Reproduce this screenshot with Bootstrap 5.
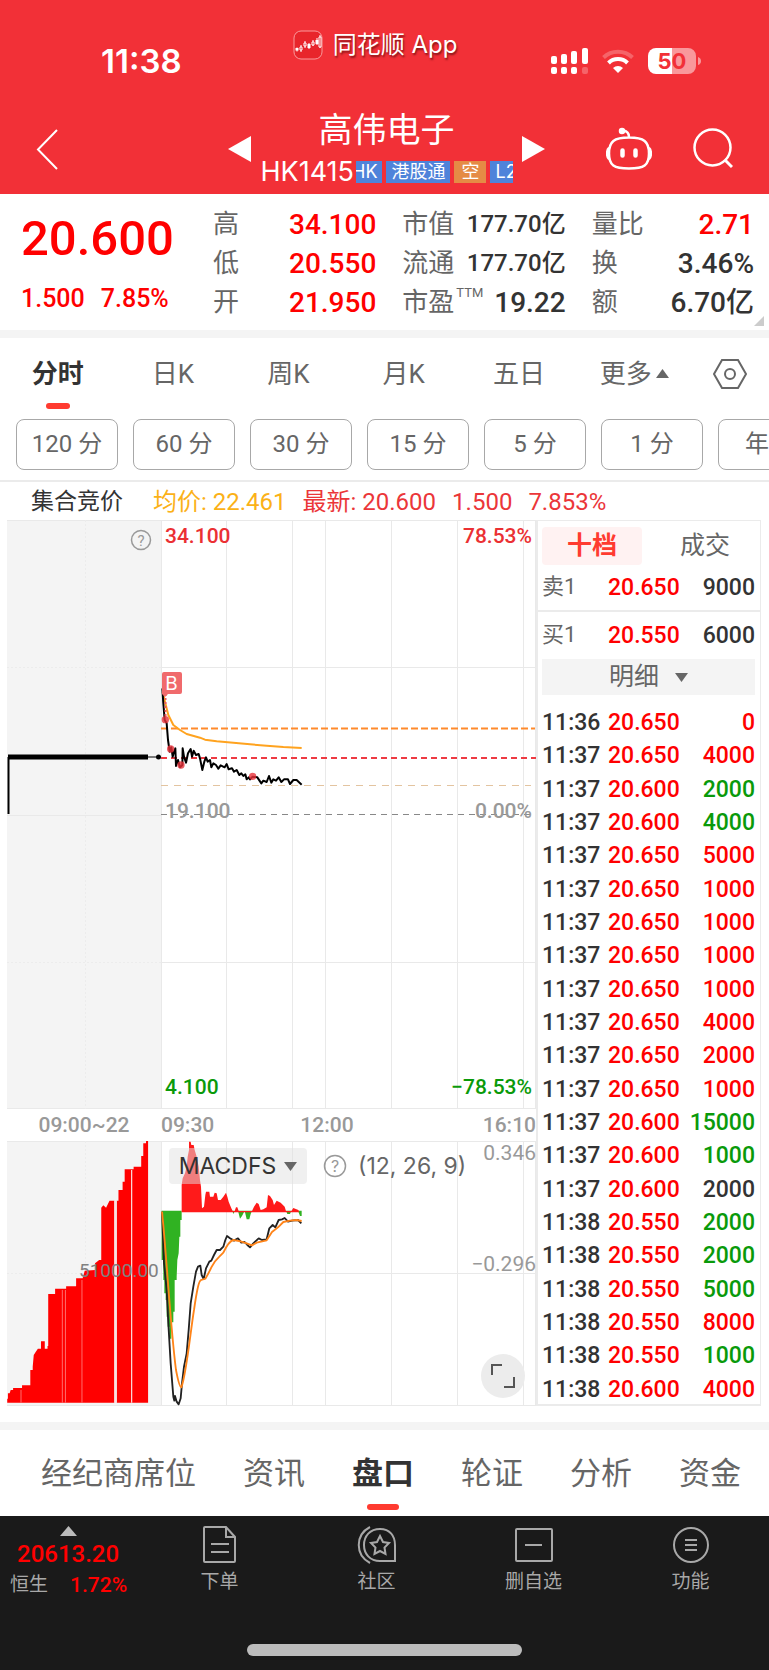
<!DOCTYPE html>
<html lang="zh-CN">
<head>
<meta charset="utf-8">
<meta name="viewport" content="width=device-width, initial-scale=1">
<title>高伟电子 HK1415</title>
<link href="https://cdn.jsdelivr.net/npm/bootstrap@5.3.0/dist/css/bootstrap.min.css" rel="stylesheet">
<style>
:root{--up:#f00;--down:#0a9a0a;--ink:#333;--soft:#666;--faint:#999;--line:#ebebeb;--strip:#f4f4f4}
body{font-family:Roboto,"Noto Sans CJK SC",sans-serif;color:var(--ink);background:#fff;line-height:1.2;overflow-x:hidden}
button{background:none;border:0;padding:0;color:inherit}
a{color:inherit;text-decoration:none}
svg{display:block;flex:none}
.ui{font-family:Inter,"Noto Sans CJK SC",sans-serif}
.up{color:var(--up)!important}.down{color:var(--down)!important}
.strip{height:8px;background:var(--strip)}

.top{background:#f23037;color:#fff}
.status{height:90px;padding:0 68px 0 101px}
.status>*{flex:1 1 0}
.clock{font-size:33px;font-weight:600;line-height:36px;padding-top:43px}
.appname{font-size:24px;line-height:30px;padding-top:30px;margin:0 52px 0 0;text-shadow:1px 2px 2px rgba(60,0,0,.6);white-space:nowrap}
.signals{padding-top:47px}
.titlebar{height:104px;padding:14px 36px 0}
.stock{width:252px}
.stock h1{font-size:34px;line-height:44px;margin:4px 0 6px;font-weight:400;text-align:center}
.code{font-size:27px;line-height:28px}
.chips{overflow:hidden;margin-left:2px}
.chip{font-size:18px;line-height:22px;height:22px;background:#4f83da;padding:0 5px;white-space:nowrap}
.chip.first{padding-left:0;margin-left:-4px}
.chip.short{background:#e58b45;padding:0 7px}
.side{width:184px}

.quote{padding:11px 15px 8px 21px;position:relative}
.last{width:192px}
.last .big{font-size:49px;font-weight:500;line-height:60px;margin-top:4px}
.last .chg{font-size:25px;font-weight:500;line-height:30px;gap:16px;margin-top:15px}
.stats{flex:1;display:grid;grid-template-columns:163fr 163fr 162fr;column-gap:26px;font-size:28px;font-weight:500}
.stats>div{height:39px}
.stats dt{font-size:26px;font-weight:400;color:var(--soft)}
.stats dd{margin:0}
.stats .mid{font-size:24px}
.stats sup{font-size:13px;top:-14px;margin-left:2px}
.corner{position:absolute;right:5px;bottom:4px}

.periods{height:81px;font-size:26px;color:var(--soft)}
.periods button{flex:1 1 0;display:flex;justify-content:center;align-items:flex-start;line-height:72px;height:81px;position:relative;white-space:nowrap}
.periods .gear{flex:0 0 77px}
.active-tab{color:var(--ink);font-weight:700}
.active-tab::after{content:"";position:absolute;left:50%;bottom:0;width:24px;height:6px;margin:0 0 10px -12px;border-radius:3px;background:#ff3b30}
.minutes{gap:15px;padding:0 0 10px 16px;overflow:hidden;border-bottom:2px solid var(--line)}
.minutes button{flex:0 0 102px;height:51px;border:1px solid #a8a8a8;border-radius:8px;font-size:24px;color:var(--soft);white-space:nowrap}
.legend-row{height:38px;padding:2px 0 0 31px;font-size:24px;gap:16px;color:#eb3639}
.legend-row .avg{color:#fbb117}
.legend-row .auction{color:var(--ink);font-size:23px;margin-right:14px}

.market{padding:0 8px 0 7px}
.plots{flex:1 1 0;min-width:0}
.plot{position:relative;font-size:21px;line-height:24px}
.plot svg.canvas{width:100%;height:auto}
.tag{position:absolute;color:var(--faint)}
.mid-weight{font-weight:500}
.axis{height:32px;font-size:21px;line-height:32px;color:var(--faint);font-weight:500}
.axis .noon{margin-left:86px}
.macd{position:absolute;left:162px;top:7px;height:36px}
.macd .pick{height:36px;width:138px;border-radius:4px;background:rgba(226,226,226,.5);font-size:23px;color:var(--ink)}
.macd .args{font-size:23px;color:var(--soft);white-space:nowrap;margin-left:11px}
.expand{position:absolute;right:11px;bottom:8px;width:44px;height:44px;border-radius:50%;background:#ececec}

.book{flex:0 0 225px;border:1px solid var(--line);border-width:1px 1px 2px 2px;padding:6px 5px 0 4px}
.book .tabs{height:38px;font-size:25px;color:var(--soft)}
.book .tabs button{flex:0 0 100px;border-radius:4px;line-height:38px}
.book .tabs .on{background:#fff2f2;color:#ff3b30;font-weight:700}
.level{height:47px;font-size:23px;font-weight:500}
.level span:first-child{width:66px;font-size:22px;font-weight:400;color:var(--soft)}
.level.ask{border-bottom:2px solid var(--line);margin:0 -5px 0 -4px;padding:0 5px 0 4px}
.detail{height:36px;width:100%;background:var(--strip);font-size:25px;color:var(--soft);line-height:36px;margin-bottom:9px}
.ticks{width:100%;height:700px;font-size:23px;font-weight:500;line-height:28px}
.ticks td{padding:5px 0 0}
.ticks td:first-child{width:66px}

.pages{height:86px;padding:0 20px 0 41px;gap:47px;font-size:31px;color:var(--soft);overflow:hidden}
.pages a{line-height:88px;white-space:nowrap;position:relative}
.pages .active-tab{color:var(--ink)}
.pages .active-tab::after{width:32px;margin:0 0 6px -16px}

.dock{background:#1a1a1a;color:#a8a8a8;font-size:19px}
.dock .items{padding-top:10px;height:128px}
.dock .items>*{flex:1 1 0;text-align:center}
.dock .index{flex:0 0 141px;text-align:left}
.dock .index .v{font-size:24px;line-height:30px;padding-left:17px;margin-top:3px;font-weight:500}
.dock .index .n{line-height:24px;margin-top:4px;padding-left:10px;gap:22px}
.dock .index .p{font-size:21px;font-weight:500}
.dock svg{margin:0 auto 7px}
.dock .index svg{margin:0 0 0 60px}
.home{width:275px;height:12px;border-radius:6px;background:#bcbcbc;margin:0 auto}
.dock .foot{height:14px}
</style>
</head>
<body>

<header class="top">
  <div class="status d-flex">
    <div class="clock ui">11:38</div>
    <div class="appname ui d-flex justify-content-center">
      <svg class="me-2" width="32" height="30" viewBox="0 0 32 30" fill="none" stroke="#fff">
        <rect x="1" y="1" width="28" height="28" rx="7" fill="#e8252b" stroke="#f99a9c"/>
        <path d="M4 17.500v4M8 15v7M12 11v7M16 13v6M20 10v6M24 8v7M27 5v13" stroke-width="1"/>
        <path d="M2.500 18h3v2.500h-3zM14.500 14h3v4h-3zM22.500 10h3v4h-3z" fill="#fff" stroke="none"/>
        <path d="M7 17h2v3H7zM11 13h2v3h-2zM19 12h2v3h-2zM26 7h2v10h-2z" fill="#e8252b" stroke-width="1"/>
      </svg><span>同花顺 App</span>
    </div>
    <div class="signals d-flex justify-content-end">
      <svg width="150" height="28" viewBox="551 47 150 28">
        <g fill="#fff"><rect x="551" y="56" width="6" height="8" rx="2"/><rect x="561" y="54" width="6" height="10" rx="2"/><rect x="571" y="51" width="6" height="13" rx="2"/><rect x="582" y="48" width="6" height="16" rx="2"/><rect x="551" y="67" width="6" height="7" rx="2"/><rect x="561" y="67" width="6" height="7" rx="2"/><rect x="571" y="67" width="6" height="7" rx="2"/><rect x="582" y="67" width="6" height="7" rx="2" opacity=".25"/></g>
        <g fill="none" stroke="#fff" stroke-width="4"><path d="M603.500 57.500a21 21 0 0 1 29 0" opacity=".25"/><path d="M608.500 63a13.500 13.500 0 0 1 19 0"/></g>
        <path d="M618 73l-5-5a7.500 7.500 0 0 1 10 0z" fill="#fff"/>
        <path d="M672 48h16a8 8 0 0 1 8 8v10a8 8 0 0 1-8 8h-16zM698 57q3 1 3 4t-3 4z" fill="#fff" opacity=".5"/>
        <path d="M672 48h-16a8 8 0 0 0-8 8v10a8 8 0 0 0 8 8h16z" fill="#fff"/>
        <text x="672" y="69" text-anchor="middle" font-family="Inter,sans-serif" font-weight="700" font-size="22" fill="#f23037">50</text>
      </svg>
    </div>
  </div>
  <div class="titlebar d-flex">
    <div class="side d-flex align-items-center">
      <button aria-label="返回"><svg width="23" height="41" viewBox="0 0 23 41" fill="none" stroke="#fff" stroke-width="2"><path d="M21 1L2 20.500 21 40"/></svg></button>
    </div>
    <button class="align-self-center ms-2" aria-label="上一只"><svg width="24" height="26" viewBox="0 0 24 26"><path d="M0 13L23 0v26z" fill="#fff"/></svg></button>
    <div class="stock ui mx-auto">
      <h1>高伟电子</h1>
      <div class="d-flex align-items-center"><span class="code">HK1415</span>
        <div class="chips d-flex gap-1"><span class="chip first">HK</span><span class="chip">港股通</span><span class="chip short">空</span><span class="chip">L2</span></div>
      </div>
    </div>
    <button class="align-self-center me-1" aria-label="下一只"><svg width="24" height="26" viewBox="0 0 24 26"><path d="M24 13L1 0v26z" fill="#fff"/></svg></button>
    <div class="side d-flex align-items-center justify-content-end" style="gap:41px">
      <button aria-label="智能助手"><svg width="46" height="44" viewBox="606 128 46 44" fill="none" stroke="#fff" stroke-width="2.500"><path d="M629 138.500c15 0 20 4 20 16s-5 15-20 15-20-3-20-15 5-16 20-16zM629 138c0-4-2-6-6-6.500M609 149c-2.500 2-2.500 9 0 11M649 149c2.500 2 2.500 9 0 11"/><circle cx="622" cy="132" r="2" fill="#fff"/><path d="M622.500 151.500v5M635.500 151.500v5" stroke-width="4.500" stroke-linecap="round"/></svg></button>
      <button aria-label="搜索"><svg width="40" height="42" viewBox="693 129 40 42" fill="none" stroke="#fff" stroke-width="2.500"><circle cx="712.500" cy="148.500" r="18"/><path d="M725 161l7 7" stroke-width="3"/></svg></button>
    </div>
  </div>
</header>

<main>
<section class="quote d-flex">
  <div class="last up">
    <div class="big">20.600</div>
    <div class="chg d-flex"><span>1.500</span><span>7.85%</span></div>
  </div>
  <dl class="stats mb-0">
    <div class="d-flex justify-content-between align-items-center"><dt>高</dt><dd class="up">34.100</dd></div>
    <div class="d-flex justify-content-between align-items-center"><dt>市值</dt><dd class="mid">177.70亿</dd></div>
    <div class="d-flex justify-content-between align-items-center"><dt>量比</dt><dd class="up">2.71</dd></div>
    <div class="d-flex justify-content-between align-items-center"><dt>低</dt><dd class="up">20.550</dd></div>
    <div class="d-flex justify-content-between align-items-center"><dt>流通</dt><dd class="mid">177.70亿</dd></div>
    <div class="d-flex justify-content-between align-items-center"><dt>换</dt><dd>3.46%</dd></div>
    <div class="d-flex justify-content-between align-items-center"><dt>开</dt><dd class="up">21.950</dd></div>
    <div class="d-flex justify-content-between align-items-center"><dt>市盈<sup>TTM</sup></dt><dd>19.22</dd></div>
    <div class="d-flex justify-content-between align-items-center"><dt>额</dt><dd>6.70亿</dd></div>
  </dl>
  <svg class="corner" width="10" height="10"><path d="M10 0v10H0z" fill="#ccc"/></svg>
</section>
<div class="strip"></div>

<nav class="periods d-flex">
  <button class="active-tab">分时</button><button>日K</button><button>周K</button><button>月K</button><button>五日</button>
  <button>更多<svg class="ms-1" width="13" height="41"><path d="M0 40h13L6.500 31z" fill="#666"/></svg></button>
  <button class="gear" aria-label="设置"><svg width="36" height="72" viewBox="0 0 36 72" fill="none" stroke="#666" stroke-width="2"><path d="M10 22h16l8 14-8 14H10L2 36z"/><circle cx="18" cy="36" r="5"/></svg></button>
</nav>
<div class="minutes d-flex">
  <button>120 分</button><button>60 分</button><button>30 分</button><button>15 分</button><button>5 分</button><button>1 分</button><button>年线</button>
</div>
<div class="legend-row d-flex align-items-center">
  <span class="auction">集合竞价</span><span class="avg">均价: 22.461</span><span>最新: 20.600</span><span>1.500</span><span>7.853%</span>
</div>

<section class="market d-flex">
  <div class="plots">
    <div class="plot">
      <svg class="canvas" viewBox="7 520 529 589" fill="none">
        <rect x="7" y="520" width="154" height="589" fill="#f4f4f4"/>
        <path d="M7 520.500h529M161 667.500h375M161 962.500h375M7 1108.500h529M161.500 520v589M226.500 520v589M292.500 520v589M325.500 520v589M391.500 520v589M457.500 520v589M523.500 520v589M535.500 520v589M7 815.500h154" stroke="#e9e9e9"/>
        <path d="M85.500 520v589M7 667.500h154M7 962.500h154" stroke="#ececec" stroke-dasharray="2 2"/>
        <circle cx="141" cy="540" r="9.500" stroke="#999" stroke-width="1.500"/>
        <text x="141" y="545.500" font-size="15" fill="#999" text-anchor="middle">?</text>
        <path d="M161 728.500h374" stroke="#ff8a2b" stroke-width="2" stroke-dasharray="7 3"/>
        <path d="M161 758h375" stroke="#ee3a42" stroke-width="2" stroke-dasharray="6 4"/>
        <path d="M161 785.500h370" stroke="#e3c4a0" stroke-dasharray="7 6"/>
        <path d="M161 814.500h374" stroke="#888" stroke-dasharray="6 5"/>
        <path d="M8.500 757v57" stroke="#000" stroke-width="2"/><path d="M8 757h140" stroke="#000" stroke-width="5"/><path d="M148 757h10" stroke="#000"/><circle cx="158.500" cy="757" r="2.500" fill="#000"/>
        <g transform="translate(150 660) scale(.33333)">
          <path d="M38 95L46 130 55 165 70 195 90 210 110 222 150 233 165 239 200 244 250 248 300 253 350 257 400 261 455 264" stroke="#ffa31f" stroke-width="6" stroke-linejoin="round"/>
          <path d="M37 85L40 130 44 180 50 190 54 240 59 275 64 262 68 290 72 275 76 265 78 318 84 300 90 322 97 315 98 265 102 290 108 308 114 280 122 267 126 290 131 272 138 285 146 282 150 295 157 330 163 305 168 292 173 305 180 300 184 322 190 310 198 315 205 326 212 316 224 322 230 312 236 328 246 325 252 335 260 330 268 345 274 340 280 348 286 343 290 358 296 352 300 358 308 350 322 352 334 370 340 362 350 366 357 348 364 368 370 358 378 362 386 352 394 366 402 358 414 358 420 372 430 360 440 360 455 374" stroke="#000" stroke-width="6" stroke-linejoin="round"/>
          <g fill="#e9323b" fill-opacity=".8"><circle cx="46" cy="179" r="11"/><circle cx="62" cy="267" r="11"/><circle cx="93" cy="315" r="11"/><circle cx="308" cy="349" r="11"/></g>
        </g>
        <path d="M165.500 694v22" stroke="#ee5a60" stroke-width="2" stroke-dasharray="2 2"/>
        <path d="M162 674q0-2 2-2h16q2 0 2 2v18q0 2-2 2h-12l-3 3-3-3z" fill="#f06a6c"/>
        <text x="171.500" y="690" font-size="19" fill="#fff" text-anchor="middle" font-family="Inter,sans-serif">B</text>
      </svg>
      <span class="tag mid-weight" style="left:158px;top:4px;color:#eb3033">34.100</span>
      <span class="tag mid-weight" style="right:4px;top:4px;color:#eb3033">78.53%</span>
      <span class="tag mid-weight" style="left:158px;top:279px">19.100</span>
      <span class="tag mid-weight" style="right:4px;top:279px">0.00%</span>
      <span class="tag mid-weight down" style="left:158px;bottom:10px">4.100</span>
      <span class="tag mid-weight down" style="right:4px;bottom:10px">−78.53%</span>
    </div>
    <div class="axis d-flex">
      <span class="text-center" style="width:154px">09:00~22</span><span>09:30</span><span class="noon">12:00</span><span class="ms-auto">16:10</span>
    </div>
    <div class="plot">
      <svg class="canvas" viewBox="7 1141 529 265" fill="none">
        <rect x="7" y="1141" width="154" height="265" fill="#f4f4f4"/>
        <path d="M7 1141.500h529M161 1273.500h375M7 1405.500h529M161.500 1141v265M226.500 1141v265M292.500 1141v265M325.500 1141v265M391.500 1141v265M457.500 1141v265M523.500 1141v265M535.500 1141v265" stroke="#e9e9e9"/>
        <path d="M85.500 1141v265M7 1273.500h154" stroke="#ececec" stroke-dasharray="2 2"/>
        <g transform="translate(0 1060) scale(.3444 .3333)">
          <path d="M21 1028V1016H23V1000H28L31 990H38V984H64V976H88V930H95V920L98 885 104 875 110 866H119V844H130V866H138V858H140V702H160V686H192V679H221V655H240L246 632 276 630V610L288 600H294V443L300 436 308 443 318 422H332V1028H339V422H344V390H356V365H362V328H388V320H410V288H416V250H424V241H430V1028z" fill="#f00"/>
          <path d="M332 422V1028H339V422zM380.500 330V1028H384V330z" fill="#f9e0e0"/>
          <path d="M61 990V1028M181 690V1028M190 690V1028M238 660V1028" stroke="#ff8080" stroke-width="2.500"/>
        </g>
        <g transform="translate(150 1130) scale(.33333)">
          <path d="M35 242V390H40V450H43V490H47V510H50V560H53V590H58V626H64V577H70V545H74V450H80V440L82 390 86 370 88 320H91V270H95V242zM246 242L251 252 254 242zM264 242L270 266 276 258 284 242 290 268H298L302 252 306 242zM408 242L412 252H420L424 242zM444 242L450 258H455V242z" fill="#30b222"/>
          <path d="M95 247V165L98 145 105 130 110 110 113 80 117 60V35H122L124 45H131L134 60 140 80 146 110 150 150 153 170 156 235 162 230 166 195 168 185H178L180 200H190L194 188 200 190 204 210H212L220 200 228 188 232 200 236 215 244 235 248 243 254 243 258 232H262L266 243H306L312 230 320 218 326 222 332 240 340 238 350 232 354 195 360 198 368 210 372 225 380 212 392 218 404 230 408 243H424L430 234 445 240 448 247z" fill="#ff1a1a"/>
          <path d="M36 245L42 400 50 480 55 580 62 700 70 800 73 812 75 798 80 815 86 823 92 805 96 760 102 710 110 670 116 600 122 520 130 470 138 425 144 410 151 407 155 435 161 447 168 415 178 395 184 392 192 375 200 360 210 360 220 350 226 330 231 318 240 325 252 332 264 325 274 338 284 336 292 345 300 352 310 340 326 325 336 330 350 328 358 295 368 285 376 292 386 270 396 268 404 264 414 275 426 272 444 270 454 280" stroke="#222" stroke-width="5.500" stroke-linejoin="round"/>
          <path d="M36 245C50 380 62 600 78 720Q88 772 94 772C108 740 122 600 132 540 142 470 148 450 154 450L166 446Q176 430 184 412 192 395 208 380L220 368Q236 334 250 330L272 334 290 340 306 346 320 338 350 331 366 306 384 292 400 276 420 272 440 270 455 273" stroke="#ff8419" stroke-width="5.500" stroke-linejoin="round"/>
        </g>
      </svg>
      <span class="tag" style="left:72px;top:118px;font-size:19px;color:#808080">51000.00</span>
      <span class="tag" style="right:0;top:0">0.346</span>
      <span class="tag" style="right:0;top:111px">−0.296</span>
      <div class="macd ui d-flex align-items-center">
        <button class="pick d-flex align-items-center justify-content-center">MACDFS<svg class="ms-2" width="13" height="9"><path d="M0 0h13L6.500 9z" fill="#666"/></svg></button>
        <button class="ms-2 ps-2" aria-label="指标说明"><svg width="24" height="24" fill="none"><circle cx="12" cy="12" r="10.500" stroke="#999" stroke-width="1.500"/><text x="12" y="18" font-size="16" fill="#999" text-anchor="middle">?</text></svg></button>
        <span class="args">(12, 26, 9)</span>
      </div>
      <button class="expand d-flex align-items-center justify-content-center" aria-label="全屏"><svg width="24" height="24" fill="none" stroke="#555" stroke-width="2"><path d="M1 11V1h10M23 13v10H13"/></svg></button>
    </div>
  </div>

  <aside class="book">
    <div class="tabs d-flex justify-content-between"><button class="on">十档</button><button>成交</button></div>
    <div class="level ask d-flex align-items-center"><span>卖1</span><span class="up">20.650</span><span class="ms-auto">9000</span></div>
    <div class="level d-flex align-items-center"><span>买1</span><span class="up">20.550</span><span class="ms-auto">6000</span></div>
    <button class="detail d-flex align-items-center justify-content-center">明细<svg class="ms-3" width="13" height="9"><path d="M0 0h13L6.500 9z" fill="#666"/></svg></button>
    <table class="ticks"><tbody>
      <tr><td>11:36</td><td class="up">20.650</td><td class="up text-end">0</td></tr>
      <tr><td>11:37</td><td class="up">20.650</td><td class="up text-end">4000</td></tr>
      <tr><td>11:37</td><td class="up">20.600</td><td class="down text-end">2000</td></tr>
      <tr><td>11:37</td><td class="up">20.600</td><td class="down text-end">4000</td></tr>
      <tr><td>11:37</td><td class="up">20.650</td><td class="up text-end">5000</td></tr>
      <tr><td>11:37</td><td class="up">20.650</td><td class="up text-end">1000</td></tr>
      <tr><td>11:37</td><td class="up">20.650</td><td class="up text-end">1000</td></tr>
      <tr><td>11:37</td><td class="up">20.650</td><td class="up text-end">1000</td></tr>
      <tr><td>11:37</td><td class="up">20.650</td><td class="up text-end">1000</td></tr>
      <tr><td>11:37</td><td class="up">20.650</td><td class="up text-end">4000</td></tr>
      <tr><td>11:37</td><td class="up">20.650</td><td class="up text-end">2000</td></tr>
      <tr><td>11:37</td><td class="up">20.650</td><td class="up text-end">1000</td></tr>
      <tr><td>11:37</td><td class="up">20.600</td><td class="down text-end">15000</td></tr>
      <tr><td>11:37</td><td class="up">20.600</td><td class="down text-end">1000</td></tr>
      <tr><td>11:37</td><td class="up">20.600</td><td class="text-end">2000</td></tr>
      <tr><td>11:38</td><td class="up">20.550</td><td class="down text-end">2000</td></tr>
      <tr><td>11:38</td><td class="up">20.550</td><td class="down text-end">2000</td></tr>
      <tr><td>11:38</td><td class="up">20.550</td><td class="down text-end">5000</td></tr>
      <tr><td>11:38</td><td class="up">20.550</td><td class="up text-end">8000</td></tr>
      <tr><td>11:38</td><td class="up">20.550</td><td class="down text-end">1000</td></tr>
      <tr><td>11:38</td><td class="up">20.600</td><td class="up text-end">4000</td></tr>
    </tbody></table>
  </aside>
</section>
<div class="strip mt-3"></div>

<nav class="pages d-flex">
  <a href="#">经纪商席位</a><a href="#">资讯</a><a href="#" class="active-tab">盘口</a><a href="#">轮证</a><a href="#">分析</a><a href="#">资金</a>
</nav>
</main>

<footer class="dock">
  <div class="items d-flex">
    <a href="#" class="index">
      <svg width="17" height="10"><path d="M0 10h17L8.500 0z" fill="#bbb"/></svg>
      <div class="v up">20613.20</div>
      <div class="n d-flex"><span>恒生</span><span class="p up">1.72%</span></div>
    </a>
    <a href="#"><svg width="36" height="38" viewBox="0 0 36 38" fill="none" stroke="#a8a8a8" stroke-width="2"><path d="M3 1h21l9 10v24q0 1-1 1H3q-1 0-1-1V2q0-1 1-1zM24 1v10h9M9 18h18M9 26h18"/></svg>下单</a>
    <a href="#"><svg width="40" height="38" viewBox="0 0 40 38" fill="none" stroke="#a8a8a8" stroke-width="2"><path d="M23 3c10 0 15 7 15 16v16H23C13 35 7 28 7 19S13 3 23 3zM13 1C-2 9-2 29 13 37"/><path d="M23 10l3 6 6 1-4.500 4.500 1 6.500-5.500-3-5.500 3 1-6.500L14 17l6-1z"/></svg>社区</a>
    <a href="#"><svg width="38" height="38" viewBox="0 0 38 38" fill="none" stroke="#a8a8a8" stroke-width="2"><rect x="1" y="3" width="36" height="32" rx="1"/><path d="M10 19h17"/></svg>删自选</a>
    <a href="#"><svg width="38" height="38" viewBox="0 0 38 38" fill="none" stroke="#a8a8a8" stroke-width="2"><circle cx="19" cy="19" r="17"/><path d="M13 14h12M13 19h12M13 24h12"/></svg>功能</a>
  </div>
  <div class="home"></div>
  <div class="foot"></div>
</footer>

<script src="https://cdn.jsdelivr.net/npm/bootstrap@5.3.0/dist/js/bootstrap.bundle.min.js"></script>
</body>
</html>
